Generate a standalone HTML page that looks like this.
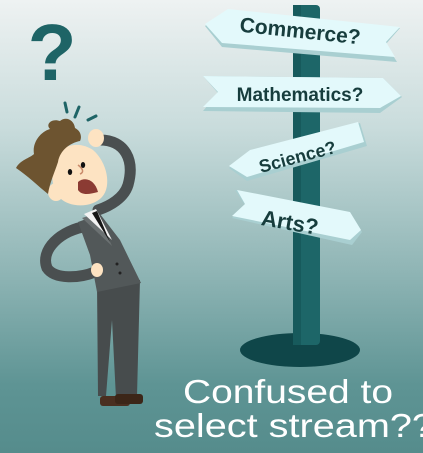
<!DOCTYPE html>
<html><head><meta charset="utf-8"><style>
html,body{margin:0;padding:0;}
body{width:423px;height:453px;overflow:hidden;background:linear-gradient(#eef2f2 0%,#c9dcdc 28%,#8fb5b5 60%,#5e9494 85%,#558c8c 100%);}
svg{position:absolute;left:0;top:0;}
</style></head><body>
<svg width="423" height="453" viewBox="0 0 423 453" xmlns="http://www.w3.org/2000/svg">
<text x="52" y="80" font-family="Liberation Sans, sans-serif" font-weight="bold" font-size="80" fill="#1e6466" text-anchor="middle">?</text>
<ellipse cx="300" cy="350" rx="60" ry="17" fill="#0f4649"/>
<rect x="293" y="5" width="27" height="340" rx="4" fill="#1d6668"/>
<rect x="293" y="5" width="8" height="340" fill="#175a5c"/>
<polygon points="205,26 228,10 400,28 386,44 397,62 222,47" fill="#a9cfd1"/>
<polygon points="205,24 228,9 400,27 386,42 395,57 222,43" fill="#e3f9fb"/>
<text x="300" y="38" transform="rotate(6 300 33)" font-family="Liberation Sans, sans-serif" font-weight="bold" font-size="21" fill="#173d3d" text-anchor="middle">Commerce?</text>
<polygon points="203,76 383,78 402,97 380,113 203,111 218,93" fill="#a9cfd1"/>
<polygon points="203,76 383,78 401,96 380,108 203,107 218,92" fill="#e3f9fb"/>
<text x="300" y="101" font-family="Liberation Sans, sans-serif" font-weight="bold" font-size="19" fill="#173d3d" text-anchor="middle">Mathematics?</text>
<polygon points="229,168 250,150 360,123 367,146 247,181" fill="#a9cfd1"/>
<polygon points="229,166 250,150 358,122 364,142 247,177" fill="#e3f9fb"/>
<text x="297" y="163" transform="rotate(-15 297 155)" font-family="Liberation Sans, sans-serif" font-weight="bold" font-size="18" fill="#173d3d" text-anchor="middle">Science?</text>
<polygon points="235,190 350,213 362,232 352,245 232,218 245,205" fill="#a9cfd1"/>
<polygon points="237,190 350,212 361,230 350,240 232,216 245,204" fill="#e3f9fb"/>
<text x="290" y="230" transform="rotate(10 290 222)" font-family="Liberation Sans, sans-serif" font-weight="bold" font-size="22" fill="#173d3d" text-anchor="middle">Arts?</text>
<g>
<path d="M65 103 L67 112 M79 107 L75 117 M88 120 L96 116" stroke="#1e6466" stroke-width="3" stroke-linecap="round"/>
<path d="M88 226 C60 230 40 250 47 268 C55 280 80 278 95 272" fill="none" stroke="#4a4f50" stroke-width="11" stroke-linecap="round"/>
<path d="M100 140 C125 140 135 160 128 185 C124 198 110 206 98 210" fill="none" stroke="#4a4f50" stroke-width="11" stroke-linecap="round"/>
<ellipse cx="96" cy="138" rx="8" ry="9" fill="#fde3c2"/>
<polygon points="97,283 140,280 137,396 116,398 112,320 106,396 98,396" fill="#474c4d"/>
<rect x="100" y="396" width="30" height="10" rx="3" fill="#4a2f20"/>
<rect x="115" y="394" width="28" height="10" rx="3" fill="#3c2618"/>
<polygon points="78,222 100,214 120,240 141,283 97,292 90,255" fill="#525859"/>
<polygon points="82,218 97,213 112,246" fill="#6b7172"/>
<polygon points="84,214 96,209 112,240" fill="#f3f3f3"/>
<polygon points="92,213 97,211 110,242" fill="#161616"/>
<circle cx="117" cy="264" r="1.5" fill="#222"/><circle cx="120" cy="273" r="1.5" fill="#222"/>
<ellipse cx="97" cy="270" rx="6" ry="7" fill="#fde3c2"/>
<path d="M52 170 C52 148 75 138 93 150 C107 162 112 186 102 197 C92 208 70 208 60 198 C53 190 52 180 52 170Z" fill="#fde3c2"/>
<ellipse cx="56" cy="192" rx="8" ry="9" fill="#fde3c2"/>
<path d="M78 182 C85 176 95 180 98 192 C90 194 82 196 78 190Z" fill="#8b3b33"/>
<ellipse cx="70" cy="172" rx="2.2" ry="3" fill="#111"/>
<ellipse cx="83" cy="165" rx="2.2" ry="3" fill="#111"/>
<path d="M78 165 C82 168 85 172 80 174" stroke="#c98a6a" stroke-width="1.5" fill="none"/>
<path d="M16 168 C20 160 30 158 34 154 C32 143 40 132 50 129 C45 124 52 118 60 121 C66 116 74 120 75 128 C81 131 82 137 80 141 C70 143 60 150 58 162 C54 174 50 182 48 194 C38 186 28 176 16 168Z" fill="#6d5430"/>
</g>
<text x="183" y="403" textLength="210" lengthAdjust="spacingAndGlyphs" font-family="Liberation Sans, sans-serif" font-size="33" fill="#ffffff">Confused to</text>
<text x="154" y="437" textLength="280" lengthAdjust="spacingAndGlyphs" font-family="Liberation Sans, sans-serif" font-size="33" fill="#ffffff">select stream??</text>
</svg>
</body></html>
